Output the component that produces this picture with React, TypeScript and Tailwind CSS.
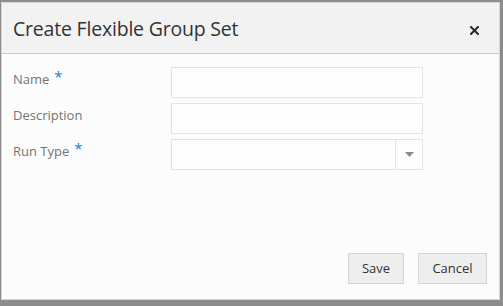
import React from "react";

function Label({ text, required }: { text: string; required?: boolean }) {
  return (
    <div className="w-[158px] shrink-0 h-[31px] flex items-start pt-[3px] text-[13px] text-[#747474]">
      <span>{text}</span>
      {required && <span className="ml-[5px] text-[#1c7fc6] text-[15px] leading-[13px]">*</span>}
    </div>
  );
}

export default function App() {
  return (
    <div className="w-[503px] h-[306px] bg-[#8c8c8c] pt-[2px] pl-[1px] font-['Open_Sans',sans-serif]">
      <div className="w-[499px] h-[298px] bg-[#fcfcfc] border border-[#d6d6d6] flex flex-col">
        <div className="h-[51px] shrink-0 bg-[#f2f2f2] border-b border-[#c9c9c9] flex items-center justify-between pl-[11px] pr-[20px]">
          <span className="text-[19.5px] text-[#333333] tracking-[-0.2px] pt-[2px]">Create Flexible Group Set</span>
          <svg width="9" height="9" viewBox="0 0 9 9" className="mt-[4px]">
            <path d="M1 1 L8 8 M8 1 L1 8" stroke="#2a2a2a" strokeWidth="2" strokeLinecap="square" />
          </svg>
        </div>
        <div className="flex flex-col gap-[5px] pl-[11px] pt-[13px]">
          <div className="flex">
            <Label text="Name" required />
            <div className="w-[252px] h-[31px] border border-[#e3e3e3] bg-[#fdfdfd]" />
          </div>
          <div className="flex">
            <Label text="Description" />
            <div className="w-[252px] h-[31px] border border-[#e3e3e3] bg-[#fdfdfd]" />
          </div>
          <div className="flex">
            <Label text="Run Type" required />
            <div className="w-[252px] h-[31px] border border-[#e3e3e3] bg-[#fdfdfd] flex justify-end">
              <div className="w-[27px] h-full border-l border-[#e3e3e3] flex items-center justify-center">
                <svg width="9" height="5" viewBox="0 0 9 5">
                  <path d="M0 0 L9 0 L4.5 5 Z" fill="#8a8a8a" />
                </svg>
              </div>
            </div>
          </div>
        </div>
        <div className="flex-1" />
        <div className="flex justify-end gap-[14px] pr-[12px] pb-[15px]">
          <button className="w-[56px] h-[31px] bg-[#eeeeee] border border-[#d4d4d4] text-[13px] text-[#333333]">Save</button>
          <button className="w-[69px] h-[31px] bg-[#eeeeee] border border-[#d4d4d4] text-[13px] text-[#333333]">Cancel</button>
        </div>
      </div>
    </div>
  );
}
